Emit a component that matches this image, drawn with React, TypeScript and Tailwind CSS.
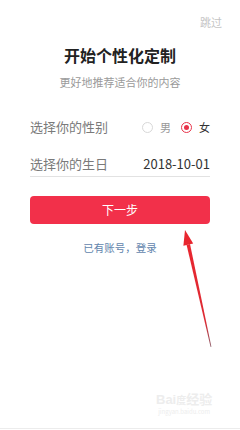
import { useState } from 'react'

// Personalisation onboarding screen — gender + birthday, then "next"

const font = { fontFamily: '"Noto Sans CJK SC", "Noto Sans", sans-serif' }

function Radio({ checked }: { checked: boolean }) {
  return (
    <span
      className={
        checked
          ? 'flex h-[11px] w-[11px] items-center justify-center rounded-full border border-[#e8334a]'
          : 'h-[11px] w-[11px] rounded-full border border-[#d8d8d8]'
      }
    >
      {checked && <span className="h-[5px] w-[5px] rounded-full bg-[#e8334a]" />}
    </span>
  )
}

function Arrow() {
  return (
    <svg className="pointer-events-none absolute left-0 top-0" width="240" height="430" viewBox="0 0 240 430">
      <defs>
        <linearGradient id="shaft" x1="0" y1="0" x2="0" y2="1">
          <stop offset="0" stopColor="#e8262f" />
          <stop offset="0.75" stopColor="#dd2a33" />
          <stop offset="1" stopColor="#8a5a66" />
        </linearGradient>
      </defs>
      <polygon points="190,244 186.6,245 210.6,347 211.4,346.8" fill="url(#shaft)" />
      <polygon points="185,230 193.2,243.5 183.4,245.7" fill="#e8262f" />
    </svg>
  )
}

export default function App() {
  const [gender, setGender] = useState<'m' | 'f'>('f')

  return (
    <div className="relative h-[430px] w-[240px] overflow-hidden bg-white" style={font}>
      <div className="flex justify-end pr-[18px] pt-[15px]">
        <span className="text-[11px] leading-[14px] text-[#c4c4c4]">跳过</span>
      </div>

      <h1 className="mt-[16px] text-center text-[16px] font-semibold leading-[20px] text-[#222]">开始个性化定制</h1>
      <p className="mt-[10px] text-center text-[11px] leading-[14px] text-[#9a9a9a]">更好地推荐适合你的内容</p>

      <div className="px-[30px]">
        <div className="mt-[28px] flex h-[20px] items-center justify-between">
          <span className="text-[13px] text-[#7a7a7a]">选择你的性别</span>
          <div className="flex items-center text-[11px] text-[#333]">
            <button className="flex items-center gap-[7px]" onClick={() => setGender('m')}>
              <Radio checked={gender === 'm'} />
              <span className="text-[#999]">男</span>
            </button>
            <button className="ml-[10px] flex items-center gap-[7px]" onClick={() => setGender('f')}>
              <Radio checked={gender === 'f'} />
              <span>女</span>
            </button>
          </div>
        </div>

        <div className="mt-[17px] flex h-[23px] items-start justify-between border-b border-[#e2e2e2]">
          <span className="text-[13px] leading-[20px] text-[#7a7a7a]">选择你的生日</span>
          <span className="text-[13px] leading-[20px] text-[#333]">2018-10-01</span>
        </div>

        <button className="mt-[19px] flex h-[28px] w-full items-center justify-center rounded-[4px] bg-[#f2304a] text-[12px] text-white">
          下一步
        </button>

        <p className="mt-[17px] text-center text-[10.5px] leading-[14px] text-[#6285ad]">已有账号，登录</p>
      </div>

      <Arrow />

      <div className="absolute left-[156px] top-[392px] flex flex-col items-center text-[#ededed]">
        <span className="text-[13px] font-bold leading-[15px]" style={{ fontFamily: '"Liberation Sans", "Noto Sans CJK SC", sans-serif' }}>
          Bai<span className="text-[10px]">度</span>经验
        </span>
        <span className="text-[6px] leading-[8px]">jingyan.baidu.com</span>
      </div>

      <div className="absolute bottom-[1px] left-0 h-px w-full bg-[#ececec]" />
    </div>
  )
}
